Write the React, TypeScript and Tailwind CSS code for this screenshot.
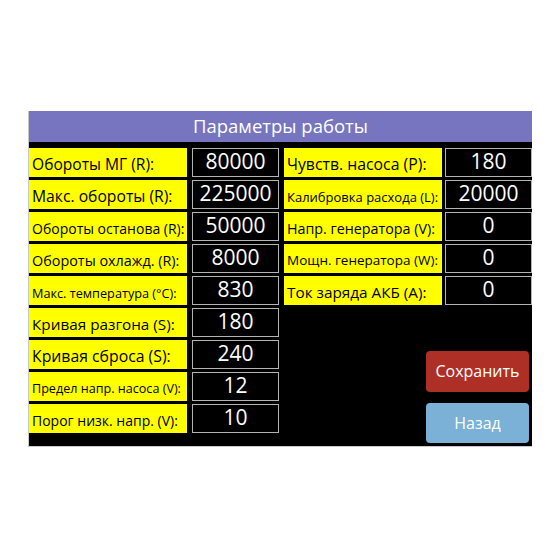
import React from "react";

type Row = { label: string; size: string; value: string };

const left: Row[] = [
  { label: "Обороты МГ (R):", size: "text-[15.6px]", value: "80000" },
  { label: "Макс. обороты (R):", size: "text-[15.7px]", value: "225000" },
  { label: "Обороты останова (R):", size: "text-[14px]", value: "50000" },
  { label: "Обороты охлажд. (R):", size: "text-[14.4px]", value: "8000" },
  { label: "Макс. температура (°C):", size: "text-[12.7px]", value: "830" },
  { label: "Кривая разгона (S):", size: "text-[15.3px]", value: "180" },
  { label: "Кривая сброса (S):", size: "text-[15.8px]", value: "240" },
  { label: "Предел напр. насоса (V):", size: "text-[12.6px]", value: "12" },
  { label: "Порог низк. напр. (V):", size: "text-[14px]", value: "10" },
];

const right: Row[] = [
  { label: "Чувств. насоса (P):", size: "text-[15.8px]", value: "180" },
  { label: "Калибровка расхода (L):", size: "text-[13px]", value: "20000" },
  { label: "Напр. генератора (V):", size: "text-[14.3px]", value: "0" },
  { label: "Мощн. генератора (W):", size: "text-[13.5px]", value: "0" },
  { label: "Ток заряда АКБ (А):", size: "text-[15.3px]", value: "0" },
];

function Label({ r }: { r: Row }) {
  return (
    <div
      className={`bg-[#ffff00] text-black ${r.size} leading-none flex items-center pl-[3px] pt-[5px] whitespace-nowrap overflow-hidden`}
    >
      {r.label}
    </div>
  );
}

function Value({ v }: { v: string }) {
  return (
    <div className="border-[1.5px] border-[#b4b4b4] bg-black text-white text-[21px] leading-none flex items-center justify-center pb-[2px]">
      {v}
    </div>
  );
}

export default function App() {
  return (
    <div
      className="w-[560px] h-[560px] bg-white pt-[111px] pl-[28px]"
      style={{ fontFamily: '"Open Sans", "Noto Sans", sans-serif' }}
    >
      <div className="w-[504px] h-[336px] bg-black border-l border-b border-[#c8c8c8] flex flex-col">
        <div className="h-[31px] bg-[#7775bf] text-white text-[18.5px] leading-none flex items-center justify-center pb-[1px]">
          Параметры работы
        </div>
        <div className="pt-[6px] grid grid-cols-[158px_92px_163px_90px] grid-rows-[repeat(9,29px)] gap-y-[3px]">
          {left.map((r, i) => (
            <React.Fragment key={i}>
              <div className="col-start-1 grid" style={{ gridRow: i + 1 }}>
                <Label r={r} />
              </div>
              <div className="col-start-2 ml-[5px] grid" style={{ gridRow: i + 1 }}>
                <Value v={r.value} />
              </div>
            </React.Fragment>
          ))}
          {right.map((r, i) => (
            <React.Fragment key={"r" + i}>
              <div className="col-start-3 ml-[5px] grid" style={{ gridRow: i + 1 }}>
                <Label r={r} />
              </div>
              <div className="col-start-4 ml-[3px] grid" style={{ gridRow: i + 1 }}>
                <Value v={r.value} />
              </div>
            </React.Fragment>
          ))}
          <div className="col-start-3 col-span-2 row-start-6 row-span-4 flex flex-col items-end pr-[3px] pt-[43px] gap-[11px]">
            <button className="w-[103px] h-[41px] shrink-0 rounded-[4px] bg-[#ae2f25] text-white text-[16px] leading-none pb-[1px]">
              Сохранить
            </button>
            <button className="w-[103px] h-[40px] shrink-0 rounded-[4px] bg-[#7bb0d7] text-white text-[16px] leading-none">
              Назад
            </button>
          </div>
        </div>
      </div>
    </div>
  );
}
